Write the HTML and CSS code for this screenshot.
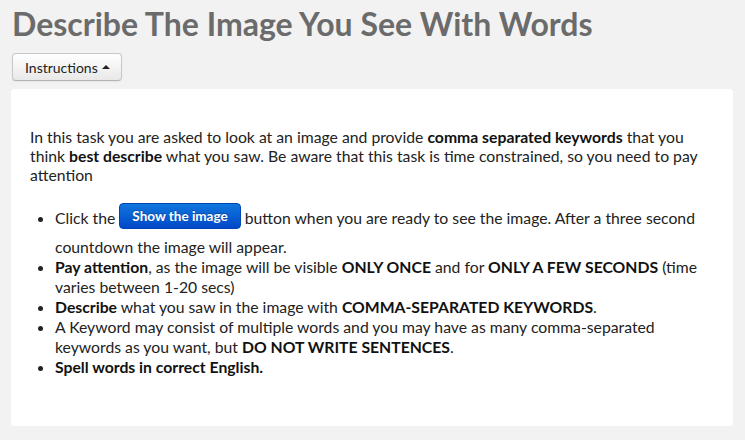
FILE: index.html
```html
<!DOCTYPE html>
<html lang="en">
<head>
<meta charset="utf-8">
<title>Describe The Image You See With Words</title>
<link rel="stylesheet" href="styles.css">
</head>
<body>
<div class="page">
  <h1 class="title">Describe The Image You See With Words</h1>
  <button class="btn-toggle" type="button">Instructions<span class="caret-up"></span></button>
  <div class="panel">
    <p class="intro">In this task you are asked to look at an image and provide <b>comma separated keywords</b> that you think <b>best describe</b> what you saw. Be aware that this task is time constrained, so you need to pay attention</p>
    <ul class="steps">
      <li>Click the <span class="btn-primary">Show the image</span> button when you are ready to see the image. After a three second countdown the image will appear.</li>
      <li><b>Pay attention</b>, as the image will be visible <b>ONLY ONCE</b> and for <b>ONLY A FEW SECONDS</b> (time varies between 1-20 secs)</li>
      <li><b>Describe</b> what you saw in the image with <b>COMMA-SEPARATED KEYWORDS</b>.</li>
      <li>A Keyword may consist of multiple words and you may have as many comma-separated keywords as you want, but <b>DO NOT WRITE SENTENCES</b>.</li>
      <li><b>Spell words in correct English.</b></li>
    </ul>
  </div>
</div>
</body>
</html>
```

FILE: styles.css
```css
html, body {
  margin: 0;
  padding: 0;
  background: #f2f2f2;
}
body {
  font-family: Lato, "Open Sans", sans-serif;
  color: #222;
  width: 745px;
  height: 440px;
  overflow: hidden;
}
.page {
  padding: 5px 12px 0 11px;
}
.title {
  margin: 0 0 10px 1px;
  font-size: 32px;
  line-height: 38px;
  font-weight: 700;
  color: #6b6b6b;
}
.btn-toggle {
  display: flex;
  align-items: center;
  height: 28px;
  margin: 0 0 8px 1px;
  padding: 0 11px 0 12px;
  font-family: Lato, sans-serif;
  font-size: 14px;
  color: #222;
  background: linear-gradient(#ffffff, #e8e8e8);
  border: 1px solid #c8c8c8;
  border-bottom-color: #b3b3b3;
  border-radius: 4px;
  box-shadow: inset 0 1px 0 rgba(255,255,255,.2), 0 1px 2px rgba(0,0,0,.05);
}
.caret-up {
  display: inline-block;
  width: 0;
  height: 0;
  margin-left: 4px;
  border-left: 4px solid transparent;
  border-right: 4px solid transparent;
  border-bottom: 4px solid #222;
}
.panel {
  background: #fff;
  border-radius: 4px;
  padding: 38px 19px 40px 19px;
  height: 337px;
  box-sizing: border-box;
}
.intro {
  margin: 0 0 11px;
  font-size: 15.75px;
  line-height: 19px;
}
b {
  font-weight: 700;
  color: #111;
}
.steps {
  margin: 0;
  padding-left: 25px;
  font-size: 15.75px;
  line-height: 20px;
}
.btn-primary {
  display: inline-block;
  margin: 8px 0;
  padding: 3px 12px;
  font-size: 13.5px;
  line-height: 18px;
  font-weight: 700;
  color: #fff;
  background: linear-gradient(#1176dc, #0049c9);
  border: 1px solid #0045b8;
  border-radius: 4px;
  vertical-align: 3px;
  text-shadow: 0 -1px 0 rgba(0,0,0,.25);
}
```
